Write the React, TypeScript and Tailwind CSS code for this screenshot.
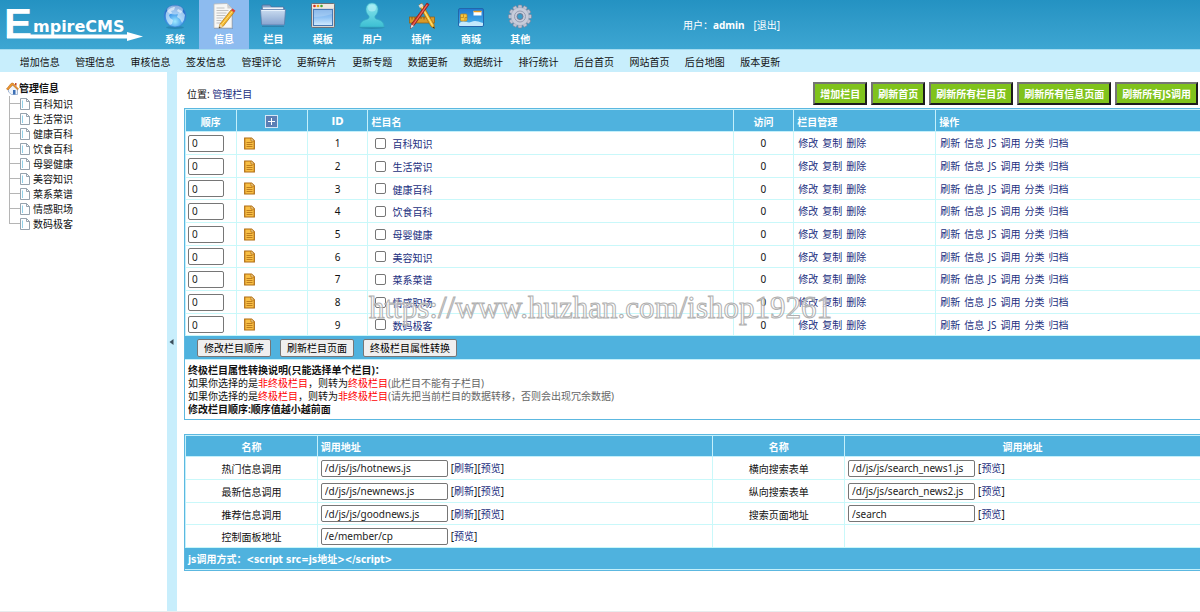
import React, { useState } from 'react';

const tabs = ['系统', '信息', '栏目', '模板', '用户', '插件', '商城', '其他'];

const subNav = [
    '增加信息', '管理信息', '审核信息', '签发信息', '管理评论', '更新碎片', '更新专题',
    '数据更新', '数据统计', '排行统计', '后台首页', '网站首页', '后台地图', '版本更新',
];

const columns = ['百科知识', '生活常识', '健康百科', '饮食百科', '母婴健康', '美容知识', '菜系菜谱', '情感职场', '数码极客'];

const toolbar = ['增加栏目', '刷新首页', '刷新所有栏目页', '刷新所有信息页面', '刷新所有JS调用'];

const calls = [
    { name: '热门信息调用', url: '/d/js/js/hotnews.js', refresh: true, name2: '横向搜索表单', url2: '/d/js/js/search_news1.js' },
    { name: '最新信息调用', url: '/d/js/js/newnews.js', refresh: true, name2: '纵向搜索表单', url2: '/d/js/js/search_news2.js' },
    { name: '推荐信息调用', url: '/d/js/js/goodnews.js', refresh: true, name2: '搜索页面地址', url2: '/search' },
    { name: '控制面板地址', url: '/e/member/cp', refresh: false, name2: '', url2: '' },
];

const th = 'border-r border-b border-[#c4f0fb] px-[3px] pt-[2px] font-bold last:border-r-0';
const td = 'border-r border-b border-[#c9f8fa] px-[3px] last:border-r-0';
const textTd = `${td} pt-[2px]`;
const field = 'h-[17px] rounded-[2px] border border-[#767676] bg-white px-[3px] text-[10px] text-[#222]';

const Logo = () => (
    <svg width="150" height="49" viewBox="0 0 150 49" fill="#fff" aria-label="EmpireCMS">
        <text x="4" y="38" fontSize="42" fontWeight="700" fontFamily="'Liberation Sans', sans-serif">E</text>
        <text x="33" y="32" fontSize="16" fontWeight="700" fontFamily="'DejaVu Sans', sans-serif">mpireCMS</text>
        <path d="M7 34.500H127V32L143 36.500L127 41V38.500H7Z" />
    </svg>
);

const TabIcon = ({ name }: { name: string }) => {
    switch (name) {
        case '系统':
            return (
                <svg width="28" height="28" viewBox="0 0 28 28">
                    <defs>
                        <radialGradient id="globe" cx="50%" cy="75%" r="75%">
                            <stop offset="0" stopColor="#9feaff" />
                            <stop offset="0.5" stopColor="#3f97ea" />
                            <stop offset="1" stopColor="#1a58b4" />
                        </radialGradient>
                    </defs>
                    <ellipse cx="14" cy="25.500" rx="9" ry="1.500" fill="#1b6f9c" opacity="0.500" />
                    <circle cx="14" cy="14" r="11" fill="url(#globe)" stroke="#3b85d0" strokeWidth="0.700" />
                    <path d="M5 11c2-4 6-6 9-6l-1 3-3 1 1 2-3 2 1 3 3 2-1 4-2 1c-3-3-5-7-4-12z" fill="#e9f8ff" opacity="0.600" />
                    <path d="M17 7l4 2 3 4-1 5-2 3-2-4-3-2 1-3 2-1-3-2z" fill="#e9f8ff" opacity="0.600" />
                    <ellipse cx="14" cy="8" rx="8" ry="4.500" fill="#fff" opacity="0.500" />
                </svg>
            );
        case '信息':
            return (
                <svg width="28" height="28" viewBox="0 0 28 28">
                    <path d="M4 3h15l4 4v20H4z" fill="#5f7fae" opacity="0.500" />
                    <path d="M4 2l13-0.500 5 5V26H4z" fill="#f7f7f5" stroke="#b9b9b9" strokeWidth="0.800" />
                    <path d="M17 1.500l0.500 5 4.500 0z" fill="#cfcfcf" />
                    <path d="M6.500 6h8M6.500 8.500h12M6.500 11h10M6.500 13.500h9M6.500 16h7M6.500 18.500h5M6.500 21h4" stroke="#b4b4b4" strokeWidth="0.800" />
                    <path d="M9 26l1-4L21 8l3 2.500L13 24.500z" fill="#f5b62a" stroke="#a8741a" strokeWidth="0.700" />
                    <path d="M11.500 23L22.500 9.300" stroke="#ffe07a" />
                    <path d="M21 8l1.500-1.500 3 2.300L24 10.500z" fill="#d9433a" />
                    <path d="M9 26l1-4 3 2.500z" fill="#f0d7a8" />
                    <path d="M9 26l0.400-1.600 1.200 1z" fill="#222" />
                </svg>
            );
        case '栏目':
            return (
                <svg width="28" height="28" viewBox="0 0 28 28">
                    <defs>
                        <linearGradient id="folder" x1="0" y1="0" x2="0" y2="1">
                            <stop offset="0" stopColor="#cbdcf0" />
                            <stop offset="1" stopColor="#86a3cf" />
                        </linearGradient>
                    </defs>
                    <path d="M3 4q0-1 1-1h7l1.500 2H24q1 0 1 1v4H3z" fill="#8aa5c8" stroke="#4f6f9c" strokeWidth="0.800" />
                    <path d="M4 5.500h20v4H4z" fill="#f0f4f9" />
                    <path d="M1.500 7.500h25l-1 14.500q0 1-1 1h-21q-1 0-1-1z" fill="url(#folder)" stroke="#5b7cab" strokeWidth="0.800" />
                    <path d="M2.500 8.500h23" stroke="#e5f0fb" />
                    <path d="M3 24.500h22" stroke="#2a6a92" opacity="0.500" />
                </svg>
            );
        case '模板':
            return (
                <svg width="28" height="28" viewBox="0 0 28 28">
                    <defs>
                        <linearGradient id="pane" x1="0" y1="0" x2="0" y2="1">
                            <stop offset="0" stopColor="#6fa7e6" />
                            <stop offset="0.500" stopColor="#8fc2f4" />
                            <stop offset="1" stopColor="#d4ecff" />
                        </linearGradient>
                    </defs>
                    <rect x="2.500" y="1.500" width="23" height="24" rx="1" fill="#d8d8d8" stroke="#6d7076" />
                    <rect x="3" y="2" width="22" height="4" fill="#efe9e0" />
                    <circle cx="5.500" cy="4" r="1.300" fill="#dd2b1c" />
                    <circle cx="9" cy="4" r="1.300" fill="#e6a817" />
                    <circle cx="12.500" cy="4" r="1.300" fill="#4aa52c" />
                    <rect x="4.500" y="7.500" width="19" height="16" fill="url(#pane)" stroke="#4779b5" />
                    <path d="M5 15c6 0 12-1 18-3V8H5z" fill="#fff" opacity="0.200" />
                </svg>
            );
        case '用户':
            return (
                <svg width="28" height="28" viewBox="0 0 28 28">
                    <defs>
                        <linearGradient id="person" x1="0" y1="0" x2="0" y2="1">
                            <stop offset="0" stopColor="#8be6ee" />
                            <stop offset="1" stopColor="#3cbfd3" />
                        </linearGradient>
                    </defs>
                    <ellipse cx="14" cy="25.500" rx="12.500" ry="1.500" fill="#1c7a9c" opacity="0.500" />
                    <path d="M14 1c4 0 6 3 6 6.500 0 3-1.500 5-3 6.500-0.500 2 0.500 3 2.500 3.500 4 1 6.500 3 6.500 7.500H2c0-4.500 2.500-6.500 6.500-7.500 2-0.500 3-1.500 2.500-3.500C9.500 12.500 8 10.500 8 7.500 8 4 10 1 14 1z" fill="url(#person)" stroke="#38aec4" strokeWidth="0.700" />
                    <ellipse cx="14" cy="6" rx="4" ry="3.500" fill="#c9f8fb" opacity="0.500" />
                </svg>
            );
        case '插件':
            return (
                <svg width="28" height="28" viewBox="0 0 28 28">
                    <rect x="1.500" y="15" width="25" height="6" fill="#d99a2b" stroke="#8f5d12" strokeWidth="0.700" />
                    <path d="M4 15v2.500M7 15v2M10 15v2.500M13 15v2M16 15v2.500M19 15v2M22 15v2.500" stroke="#7b5010" strokeWidth="0.800" />
                    <path d="M11 3l3-1.500 12 21 0.500 4-3.500-2z" fill="#f6bb2e" stroke="#9a6515" strokeWidth="0.700" />
                    <path d="M12.500 2.500l12 21" stroke="#ffe88c" />
                    <path d="M10.500 3.500L14 1.500l1.500 2.500-3.500 2z" fill="#d9dadb" />
                    <path d="M26.500 26.500l-0.600-2-1.200 1z" fill="#222" />
                    <path d="M19 1l2 1.500L6 23.500l-3.500 3 1-4.500z" fill="#d3362c" stroke="#7d1a14" strokeWidth="0.700" />
                    <path d="M19 3L5 23" stroke="#ef8577" strokeWidth="0.800" />
                    <path d="M2.500 26.500l1-4 2.500 1.500z" fill="#e8e8e8" />
                </svg>
            );
        case '商城':
            return (
                <svg width="28" height="28" viewBox="0 0 28 28">
                    <defs>
                        <linearGradient id="card" x1="0" y1="0" x2="0" y2="1">
                            <stop offset="0" stopColor="#1f78d2" />
                            <stop offset="1" stopColor="#49b6ee" />
                        </linearGradient>
                    </defs>
                    <rect x="1.500" y="6.500" width="25" height="18" rx="1.500" fill="url(#card)" stroke="#2266ac" />
                    <path d="M2 22c4-6 8 0 12-2s6-1 12 1v2q0 1-1 1H3q-1 0-1-1z" fill="#d9f3ff" opacity="0.850" />
                    <rect x="16.500" y="9" width="8" height="4.500" fill="#fff" />
                    <path d="M16.500 9.500h8" stroke="#e99c22" strokeWidth="1.500" />
                    <rect x="3.500" y="12" width="6.500" height="7" rx="1" fill="#f4c543" stroke="#b77f16" strokeWidth="0.700" />
                    <path d="M3.500 15.500h3v-3M10 15.500H8v3" stroke="#a87413" strokeWidth="0.600" fill="none" />
                </svg>
            );
        default:
            return (
                <svg width="28" height="28" viewBox="0 0 28 28">
                    {[0, 30, 60, 90, 120, 150].map(a => (
                        <rect key={a} x="12" y="3" width="4" height="23" rx="1" fill="#bfc4d4" stroke="#7a8198" strokeWidth="0.600" transform={`rotate(${a} 14 14.500)`} />
                    ))}
                    <circle cx="14" cy="14.500" r="9" fill="#c7ccda" stroke="#9ea4b8" strokeWidth="0.500" />
                    <circle cx="14" cy="14.500" r="5.500" fill="none" stroke="#979db2" />
                    <circle cx="14" cy="14.500" r="3" fill="#3a9dca" stroke="#747b94" />
                </svg>
            );
    }
};

const HomeIcon = () => (
    <svg width="13" height="13" viewBox="0 0 13 13">
        <path d="M2.500 6.500L7 3l4.500 4v5.500h-6L2.500 10z" fill="#eef3fa" stroke="#8aa3c8" strokeWidth="0.700" />
        <path d="M0.500 7L5 1.500 7 1l5.500 6-1 0.800L6.500 3 2 8z" fill="#ef9a2e" stroke="#b8641a" strokeWidth="0.600" />
        <path d="M9 1h1.500v3L9 2.500z" fill="#c2452c" />
        <rect x="7" y="8" width="2.500" height="4.500" fill="#3c70b6" />
    </svg>
);

const PageIcon = () => (
    <svg width="10" height="12" viewBox="0 0 10 12">
        <path d="M0.500 0.500H6.500L9.500 3.500V11.500H0.500Z" fill="#fdfeff" stroke="#8b98a5" strokeWidth="0.900" />
        <path d="M6.500 0.500V3.500H9.500" fill="none" stroke="#8b98a5" strokeWidth="0.900" />
        <path d="M2.500 2.500V10" stroke="#8fd0e8" />
    </svg>
);

const NoteIcon = () => (
    <svg width="11" height="13" viewBox="0 0 11 13">
        <path d="M0.700 1H7.500L10.300 3.800V12H0.700Z" fill="#f8bf45" stroke="#b06c12" strokeWidth="1.200" />
        <path d="M7 1v3h3" fill="#fde5a6" stroke="#b06c12" strokeWidth="0.800" />
        <path d="M2.500 5.500H8.500M2.500 7.500H8.500M2.500 9.500H8.500" stroke="#b8761a" strokeWidth="0.900" />
    </svg>
);

const Link = ({ children }: { children: React.ReactNode }) => (
    <a href="#" className="text-[#1b2f80] hover:underline">{children}</a>
);

const Links = ({ items }: { items: string[] }) => (
    <div className="flex gap-1">
        {items.map(t => <Link key={t}>{t}</Link>)}
    </div>
);

const Header = ({ active, onSelect }: { active: string, onSelect: (t: string) => void }) => (
    <header>
        <div className="flex h-[49px] bg-linear-to-b from-[#2492c2] to-[#3da6d2] text-white">
            <Logo />
            <nav className="grid w-[395px] grid-cols-8">
                {tabs.map(t => (
                    <button
                        key={t}
                        onClick={() => onSelect(t)}
                        className={`flex flex-col items-center gap-[2px] pt-[2px] font-bold leading-[14px] ${t === active ? 'bg-[#8dbbef]' : ''}`}
                    >
                        <TabIcon name={t} />
                        {t}
                    </button>
                ))}
            </nav>
            <div className="ml-[138px] flex items-center gap-[9px]">
                <span>用户：<b>admin</b></span>
                <a href="#">[退出]</a>
            </div>
        </div>
        <nav className="border-t border-[#a5dcf0] bg-[#c8eefc] pl-3">
            <div className="grid h-[22px] w-[776px] grid-cols-14 items-center pt-px text-center">
                {subNav.map(s => <a key={s} href="#">{s}</a>)}
            </div>
        </nav>
    </header>
);

const Sidebar = () => (
    <aside className="w-[167px] shrink-0 pt-2 pl-[6px]">
        <div className="flex h-4 items-center font-bold"><HomeIcon />管理信息</div>
        <ul>
            {columns.map((c, i) => (
                <li key={c} className="flex h-[15px] items-center pl-[3px]">
                    <span className="flex h-full w-[11px] flex-col">
                        <span className="h-[8px] border-b border-l border-[#b5b5b5]" />
                        {i < columns.length - 1 && <span className="flex-1 border-l border-[#b5b5b5]" />}
                    </span>
                    <PageIcon />
                    <a href="#" className="ml-[3px]">{c}</a>
                </li>
            ))}
        </ul>
    </aside>
);

const ColumnTable = () => (
    <div className="border border-r-0 border-[#5cb8e0]">
        <table className="w-full table-fixed border-separate border-spacing-0 border-t border-l border-[#c4f0fb]">
            <thead className="bg-[#4fb2de] text-white">
                <tr className="h-[22px]">
                    <th className={`${th} w-[5%]`}>顺序</th>
                    <th className={`${th} w-[7%]`}>
                        <button aria-label="展开" className="mx-auto flex h-[13px] w-[13px] items-center justify-center border border-[#d5e6f5] bg-[#5b7fb5]">
                            <svg width="9" height="9" viewBox="0 0 9 9"><path d="M4.500 1V8M1 4.500H8" stroke="#fff" /></svg>
                        </button>
                    </th>
                    <th className={`${th} w-[6%] font-['DejaVu_Sans','Noto_Sans_CJK_SC',sans-serif]`}>ID</th>
                    <th className={`${th} w-[36%] text-left`}>栏目名</th>
                    <th className={`${th} w-[6%]`}>访问</th>
                    <th className={`${th} w-[14%] text-left`}>栏目管理</th>
                    <th className={`${th} w-[26%] text-left`}>操作</th>
                </tr>
            </thead>
            <tbody>
                {columns.map((c, i) => (
                    <tr key={c} className={i % 3 === 2 ? 'h-[22px]' : 'h-[23px]'}>
                        <td className={`${td} first:pl-[2px]`}>
                            <input aria-label={`${c} 顺序`} defaultValue="0" className={`${field} block w-[36px]`} />
                        </td>
                        <td className={`${td} pl-[7px]`}><NoteIcon /></td>
                        <td className={`${td} text-center`}>{i + 1}</td>
                        <td className={td}>
                            <div className="flex items-center gap-[6px] pl-1">
                                <input id={`col-${i}`} type="checkbox" className="h-[11px] w-[11px] appearance-none rounded-[2px] border border-[#767676] bg-white checked:bg-[#4fb2de]" />
                                <label htmlFor={`col-${i}`} className="pt-[2px] text-[#1b2f80]">{c}</label>
                            </div>
                        </td>
                        <td className={`${td} text-center`}>0</td>
                        <td className={`${td} pl-1`}><Links items={['修改', '复制', '删除']} /></td>
                        <td className={`${td} pl-1`}><Links items={['刷新', '信息', 'JS', '调用', '分类', '归档']} /></td>
                    </tr>
                ))}
            </tbody>
        </table>
        <div className="flex h-[24px] items-center gap-[9px] border-b border-[#c4f0fb] bg-[#4fb2de] pl-3">
            {['修改栏目顺序', '刷新栏目页面', '终极栏目属性转换'].map(b => (
                <button key={b} className="h-[18px] rounded-[2px] border border-[#767676] bg-[#efefef] px-[6px] leading-[14px] text-black">{b}</button>
            ))}
        </div>
        <div className="px-[3px] pt-1 pb-[3px] leading-[13px]">
            <p className="font-bold">终极栏目属性转换说明(只能选择单个栏目)：</p>
            <p>如果你选择的是<span className="text-[#f00]">非终极栏目</span>，则转为<span className="text-[#f00]">终极栏目</span><span className="text-[#666]">(此栏目不能有子栏目)</span></p>
            <p>如果你选择的是<span className="text-[#f00]">终极栏目</span>，则转为<span className="text-[#f00]">非终极栏目</span><span className="text-[#666]">(请先把当前栏目的数据转移，否则会出现冗余数据)</span></p>
            <p className="font-bold">修改栏目顺序:顺序值越小越前面</p>
        </div>
    </div>
);

const UrlCell = ({ name, url, refresh }: { name: string, url: string, refresh?: boolean }) => (
    <div className="flex items-center gap-[3px]">
        <input aria-label={name} defaultValue={url} className={`${field} w-[127px]`} />
        <span>
            {refresh && <>[<Link>刷新</Link>]</>}
            [<Link>预览</Link>]
        </span>
    </div>
);

const CallTable = () => (
    <div className="border border-r-0 border-[#5cb8e0]">
        <table className="w-full table-fixed border-separate border-spacing-0 border-t border-l border-[#c4f0fb]">
            <thead className="bg-[#4fb2de] text-white">
                <tr className="h-[21px]">
                    <th className={`${th} w-[13%]`}>名称</th>
                    <th className={`${th} w-[39%] text-left`}>调用地址</th>
                    <th className={`${th} w-[13%]`}>名称</th>
                    <th className={`${th} w-[35%]`}>调用地址</th>
                </tr>
            </thead>
            <tbody>
                {calls.map((r, i) => (
                    <tr key={r.name} className={i % 3 === 2 ? 'h-[22px]' : 'h-[23px]'}>
                        <td className={`${textTd} text-center`}>{r.name}</td>
                        <td className={td}><UrlCell name={r.name} url={r.url} refresh={r.refresh} /></td>
                        <td className={`${textTd} text-center`}>{r.name2}</td>
                        <td className={td}>{r.url2 && <UrlCell name={r.name2} url={r.url2} />}</td>
                    </tr>
                ))}
            </tbody>
        </table>
        <div className="flex h-[22px] items-center border-b border-[#c4f0fb] bg-[#4fb2de] px-[3px] pt-[2px] font-['DejaVu_Sans_Condensed','Noto_Sans_CJK_SC',sans-serif] font-bold text-white">
            js调用方式：&lt;script src=js地址&gt;&lt;/script&gt;
        </div>
    </div>
);

export default function App() {
    const [active, setActive] = useState('信息');

    return (
        <div className="flex min-h-screen flex-col border-b border-[#e8ecee] bg-white font-['Noto_Sans','Noto_Sans_CJK_SC',sans-serif] text-[10px] leading-[14px] text-[#111]">
            <Header active={active} onSelect={setActive} />
            <div className="flex flex-1">
                <Sidebar />
                <div className="flex w-[10px] shrink-0 items-center bg-[#c8eefc] pl-[2px]">
                    <svg width="5" height="6" viewBox="0 0 5 6"><path d="M4.500 0V6L0.500 3Z" fill="#3b4f5c" /></svg>
                </div>
                <main className="min-w-0 flex-1 pt-[10px] pl-[7px]">
                    <div className="flex items-center justify-between pr-[2px] pl-[3px]">
                        <div>位置: <Link>管理栏目</Link></div>
                        <div className="flex gap-1">
                            {toolbar.map(b => (
                                <button key={b} className="h-[23px] border-2 border-t-[#757575] border-r-[#1c1c1c] border-b-[#1c1c1c] border-l-[#757575] bg-[#80c31c] px-[5px] font-bold text-white">{b}</button>
                            ))}
                        </div>
                    </div>
                    <div className="relative mt-[3px]">
                        <ColumnTable />
                        <span className="pointer-events-none absolute top-[180px] left-[185px] font-['Liberation_Serif',serif] text-[31px] leading-[40px] text-white/60 [-webkit-text-stroke:1px_#b0b0b0]">
                            https://www.huzhan.com/ishop19261
                        </span>
                    </div>
                    <div className="mt-[14px]">
                        <CallTable />
                    </div>
                </main>
            </div>
        </div>
    );
}
